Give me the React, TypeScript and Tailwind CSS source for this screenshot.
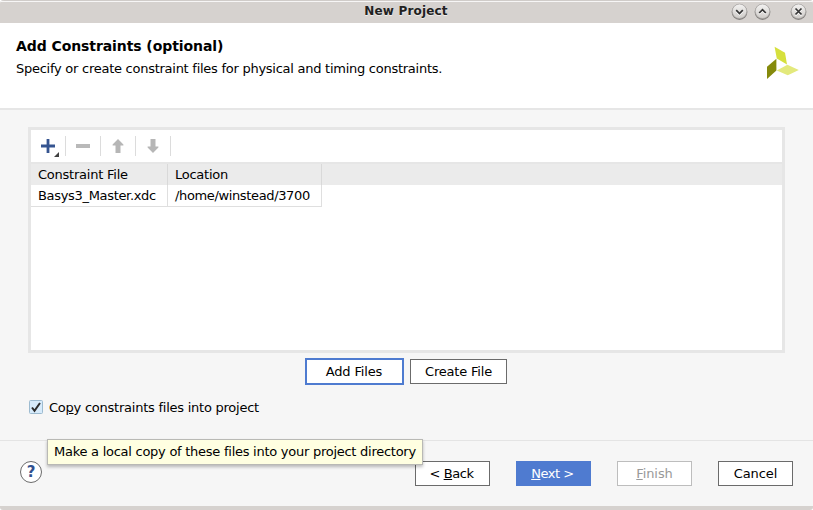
import React from "react";

function WindowButton({ d }: { d: string }) {
  return (
    <svg width="17" height="18" viewBox="0 0 17 18" className="block">
      <defs>
        <linearGradient id="knob" x1="0" y1="0" x2="0" y2="1">
          <stop offset="0" stopColor="#f3f2f1" />
          <stop offset="1" stopColor="#cfccc9" />
        </linearGradient>
      </defs>
      <circle cx="8.5" cy="9" r="7.9" fill="#858280" />
      <circle cx="8.5" cy="8.3" r="7.2" fill="url(#knob)" stroke="#a8a5a3" strokeWidth="0.6" />
      <path d={d} transform="translate(0 1)" fill="none" stroke="#fff" strokeWidth="1.7" />
      <path d={d} fill="none" stroke="#363636" strokeWidth="1.7" />
    </svg>
  );
}

function Logo() {
  return (
    <svg width="34" height="34" viewBox="0 0 34 34" className="block">
      <path d="M8.6 0.8 L19 6.8 L21 18.6 L10.8 12.4Z" fill="#d6e03d" />
      <path d="M10.4 12.8 V24.4 L1 33 V20.8Z" fill="#858a0c" />
      <path d="M10.8 24.4 L21.4 18.8 L32.8 24 L21.8 29.2Z" fill="#e3e97c" />
    </svg>
  );
}

function Separator() {
  return <div className="h-5 w-px bg-[#dcdcdc]" />;
}

function Arrow({ down = false }: { down?: boolean }) {
  return (
    <svg width="12" height="14" viewBox="0 0 12 14" className={down ? "block rotate-180" : "block"}>
      <path d="M6 0 L11.4 5.6 V6.5 H8.5 V14 H3.5 V6.5 H0.6 V5.6Z" fill="#b6b6b6" />
    </svg>
  );
}

export default function App() {
  return (
    <div className="flex h-[510px] w-[813px] flex-col overflow-hidden bg-white text-[13px] leading-[16px] text-black [font-family:'DejaVu_Sans',sans-serif] whitespace-nowrap">
      <div className="flex h-[510px] flex-col overflow-hidden rounded-t-[4px] rounded-b-[3px] bg-[#f6f6f6]">
        <div className="relative flex h-[23px] shrink-0 items-center justify-end bg-[#d6d2cf] pr-[6px] shadow-[inset_0_1px_0_#d0ccc9,inset_0_2px_0_#f7f6f6]">
          <h1 className="absolute inset-x-0 top-[3px] pr-[1px] text-center text-[12px] font-bold tracking-[0.18px] text-[#212121] [text-shadow:0_1px_0_#efedec]">New Project</h1>
          <div className="flex">
            <WindowButton d="M5.2 7.2 L8.5 10.5 L11.8 7.2" />
            <div className="ml-[6px]"><WindowButton d="M5.2 10 L8.5 6.7 L11.8 10" /></div>
            <div className="ml-[19px]"><WindowButton d="M5.5 5.5 L11.5 11.5 M11.5 5.5 L5.5 11.5" /></div>
          </div>
        </div>

        <header className="flex h-[87px] shrink-0 justify-between border-b-2 border-[#e6e6e6] bg-white pl-4 pr-[13px]">
          <div className="pt-[15px]">
            <h2 className="text-[14px] leading-[16px] font-bold tracking-[-0.08px]">Add Constraints (optional)</h2>
            <p className="mt-[7px] tracking-[-0.26px]">Specify or create constraint files for physical and timing constraints.</p>
          </div>
          <div className="pt-[23px]"><Logo /></div>
        </header>

        <main className="flex h-[330px] shrink-0 flex-col pl-7 pt-[17px]">
          <section className="h-[226px] w-[757px] border-[3px] border-[#e6e6e6] bg-white">
            <div className="flex h-[32px] items-center">
              <div className="flex w-[34px] items-center pl-[10px]">
                <svg width="20" height="22" viewBox="0 0 20 22" className="block">
                  <path d="M0 9.6H14V12.4H0Z M5.6 4H8.4V18H5.6Z" fill="#355490" />
                  <path d="M18 17 V22 H13Z" fill="#404040" />
                </svg>
              </div>
              <Separator />
              <div className="flex w-[34px] justify-center"><div className="h-[4px] w-[14px] bg-[#b9b9b9]" /></div>
              <Separator />
              <div className="flex w-[34px] justify-center"><Arrow /></div>
              <Separator />
              <div className="flex w-[34px] justify-center"><Arrow down /></div>
              <Separator />
            </div>
            <div className="h-[2px] bg-[#e6e6e6]" />
            <div className="flex h-[21px] bg-[#ebebeb]">
              <div className="w-[137px] border-r border-[#d9d9d9] pl-[7px] pt-[3px] tracking-[-0.23px]">Constraint File</div>
              <div className="w-[154px] border-r border-[#d9d9d9] pl-[7px] pt-[3px] tracking-[-0.25px]">Location</div>
            </div>
            <div className="flex h-[22px]">
              <div className="w-[137px] border-r border-b border-[#dfdfdf] pl-[7px] pt-[3px] tracking-[-0.32px]">Basys3_Master.xdc</div>
              <div className="w-[154px] border-r border-b border-[#dfdfdf] pl-[7px] pt-[3px] tracking-[-0.36px]">/home/winstead/3700</div>
            </div>
          </section>

          <div className="mt-[5px] flex h-[27px] items-center gap-[6px] pl-[277px]">
            <button className="h-[27px] w-[99px] border-2 border-[#4e7bd0] bg-white pr-[1px] tracking-[-0.15px]">Add Files</button>
            <button className="h-[25px] w-[97px] border border-[#6b6b6b] bg-white tracking-[-0.2px]">Create File</button>
          </div>

          <label className="mt-[14px] flex items-center pl-[1px]">
            <svg width="14" height="14" viewBox="0 0 14 14" className="block">
              <rect x="0.5" y="0.5" width="13" height="13" rx="1" fill="#d7ebfb" stroke="#9dbbd0" />
              <path d="M3 7.5 L5.5 10.8 L11 3" fill="none" stroke="#2d2d2d" strokeWidth="2" />
            </svg>
            <span className="ml-[6px] mt-[1px] -mb-[1px] tracking-[-0.24px]">Co<u>p</u>y constraints files into project</span>
          </label>
        </main>

        <footer className="relative flex h-[66px] shrink-0 items-start border-t border-[#e4e4e4] pl-[20px] pt-[20px]">
          <button className="flex h-[22px] w-[22px] items-center justify-center rounded-full border border-[#6b6b6b] bg-white text-[15px] font-bold text-[#30508f]">?</button>
          <div className="ml-[373px] flex gap-[26px]">
            <button className="h-[25px] w-[75px] border border-[#6b6b6b] bg-white pr-[2px] tracking-[-0.4px]">&lt; <u>B</u>ack</button>
            <button className="h-[25px] w-[75px] bg-[#4f7bd0] pr-[2px] tracking-[-0.45px] text-white"><u>N</u>ext &gt;</button>
            <button className="h-[25px] w-[75px] border border-[#bdbdbd] bg-white tracking-[-0.1px] text-[#999]"><u>F</u>inish</button>
            <button className="h-[25px] w-[75px] border border-[#6b6b6b] bg-white tracking-[-0.1px]">Cancel</button>
          </div>
          <div role="tooltip" className="absolute -top-[2px] left-[47px] h-[26px] w-[376px] border border-[#b9b9b5] bg-[#ffffe1] pl-[6px] pt-[4px] tracking-[-0.26px] shadow-[0_2px_3px_rgba(0,0,0,0.25)]">
            Make a local copy of these files into your project directory
          </div>
        </footer>
        <div className="h-[4px] shrink-0 bg-[#d6d2cf]" />
      </div>
    </div>
  );
}
